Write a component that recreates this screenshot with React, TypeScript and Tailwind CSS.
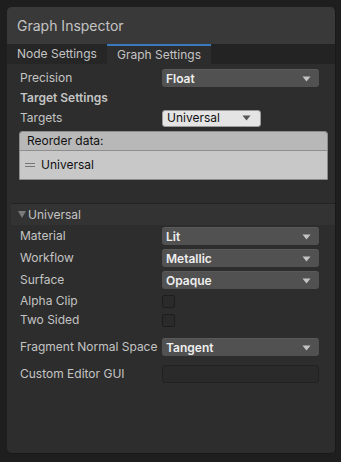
import React from "react";

const font = { fontFamily: "Inter, 'Noto Sans', sans-serif" };

function Arrow({ dark }: { dark?: boolean }) {
  return (
    <svg width="9" height="6" viewBox="0 0 9 6" className="shrink-0">
      <path d="M0.5 0.5 L8.5 0.5 L4.5 5.5 Z" fill={dark ? "#555555" : "#c4c4c4"} />
    </svg>
  );
}

function Dropdown({ value }: { value: string }) {
  return (
    <div className="w-[157px] h-[18px] rounded-[3px] bg-[#515151] border-t border-[#5a5a5a] flex items-center justify-between pl-[4px] pr-[8px] text-[12px] font-semibold text-[#eeeeee]">
      <span>{value}</span>
      <Arrow />
    </div>
  );
}

function Row({ label, children }: { label: string; children: React.ReactNode }) {
  return (
    <div className="flex items-center">
      <div className="w-[142px] text-[12px] text-[#c4c4c4] whitespace-nowrap">{label}</div>
      {children}
    </div>
  );
}

function Checkbox() {
  return <div className="w-[13px] h-[13px] rounded-[2px] bg-[#2a2a2a] border border-[#1d1d1d]" />;
}

export default function App() {
  return (
    <div className="w-[341px] h-[462px] bg-[#1e1e1e] p-[7px] pr-[5px] pb-[8px]" style={font}>
      <div className="h-full rounded-[5px] bg-[#2d2d2d] overflow-hidden flex flex-col border-b border-r border-[#191919]">
        <div className="h-[37px] bg-[#393939] flex items-center pl-[10px] text-[14px] text-[#c4c4c4]">
          Graph Inspector
        </div>
        <div className="h-[20px] bg-[#232323] flex text-[12px] text-[#c4c4c4]">
          <div className="w-[100px] bg-[#262626] flex items-center pl-[10px]">Node Settings</div>
          <div className="w-[104px] bg-[#2d2d2d] border-t-2 border-[#3a79bb] flex items-center pl-[10px]">Graph Settings</div>
        </div>
        <div className="flex flex-col pl-[13px] pt-[5px]">
          <Row label="Precision">
            <Dropdown value="Float" />
          </Row>
          <div className="mt-[3px] text-[12px] font-semibold text-[#c4c4c4] h-[16px] leading-[16px]">Target Settings</div>
          <div className="mt-[3px]">
            <Row label="Targets">
              <div className="w-[99px] h-[17px] rounded-[3px] bg-[#e4e4e4] border border-[#9a9a9a] flex items-center justify-between pl-[4px] pr-[9px] text-[12px] text-[#111111]">
                <span>Universal</span>
                <Arrow dark />
              </div>
            </Row>
          </div>
          <div className="mt-[4px] w-[309px] -ml-[1px] rounded-t-[3px] border border-[#8c8c8c] overflow-hidden">
            <div className="h-[19px] bg-[#b8b8b8] border-b border-[#8e8e8e] flex items-center pl-[7px] text-[12px] text-[#111111]">
              Reorder data:
            </div>
            <div className="h-[28px] bg-[#c8c8c8] flex items-center pl-[5px] text-[12px] text-[#111111]">
              <svg width="10" height="5" viewBox="0 0 10 5" className="mr-[6px]">
                <rect x="0" y="0" width="10" height="1" fill="#777777" />
                <rect x="0" y="3" width="10" height="1" fill="#777777" />
              </svg>
              Universal
            </div>
          </div>
        </div>
        <div className="mt-[23px] ml-[4px] h-[22px] bg-[#333333] border-t border-[#232323] flex items-center pl-[7px] text-[12px] text-[#c4c4c4]">
          <svg width="8" height="7" viewBox="0 0 8 7" className="mr-[2px]">
            <path d="M0 0 L8 0 L4 7 Z" fill="#7a7a7a" />
          </svg>
          Universal
        </div>
        <div className="flex flex-col pl-[13px] pt-[2px] gap-[4px]">
          <Row label="Material">
            <Dropdown value="Lit" />
          </Row>
          <Row label="Workflow">
            <Dropdown value="Metallic" />
          </Row>
          <Row label="Surface">
            <Dropdown value="Opaque" />
          </Row>
          <div className="h-[16px] -mt-[1px]">
            <Row label="Alpha Clip">
              <Checkbox />
            </Row>
          </div>
          <div className="h-[16px] mt-[-1px]">
            <Row label="Two Sided">
              <Checkbox />
            </Row>
          </div>
          <div className="mt-[7px]">
            <Row label="Fragment Normal Space">
              <Dropdown value="Tangent" />
            </Row>
          </div>
          <div className="mt-[5px]">
            <Row label="Custom Editor GUI">
              <div className="w-[157px] h-[18px] rounded-[3px] bg-[#2a2a2a] border border-[#212121]" />
            </Row>
          </div>
        </div>
      </div>
    </div>
  );
}
